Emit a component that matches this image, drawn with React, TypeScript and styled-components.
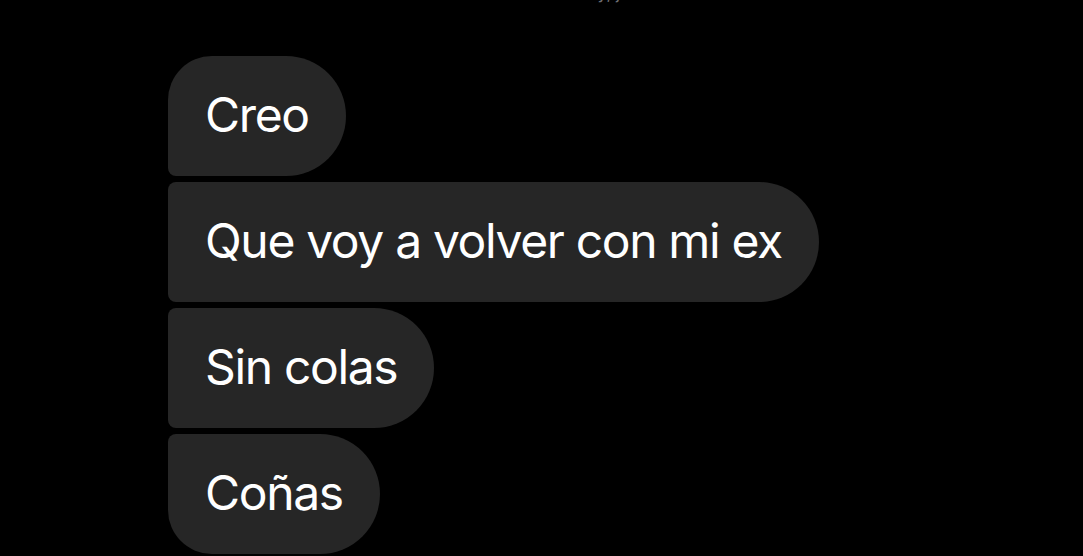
import React from 'react';
import styled, {createGlobalStyle} from "styled-components";

const GlobalStyle = createGlobalStyle`
  html, body {
    margin: 0;
    padding: 0;
    background: #000;
  }

  body {
    font-family: Inter, "Noto Sans", "Liberation Sans", sans-serif;
    -webkit-font-smoothing: antialiased;
  }
`;

const Screen = styled.div`
  width: 1083px;
  height: 556px;
  overflow: hidden;
  background: #000;
`;

const Stamp = styled.div`
  margin-top: -14px;
  height: 20px;
  text-align: center;
  padding-left: 160px;
  font-size: 17px;
  color: #6e6e73;
  line-height: 14px;
`;

const Thread = styled.div`
  display: flex;
  flex-direction: column;
  align-items: flex-start;
  gap: 6px;
  padding: 50px 0 0 168px;
`;

type Place = "first" | "middle" | "last";

const corners: Record<Place, string> = {
    first: "44px 60px 60px 8px",
    middle: "8px 60px 60px 8px",
    last: "8px 60px 60px 44px",
};

const Bubble = styled.div<{ $place: Place }>`
  display: flex;
  align-items: center;
  height: 120px;
  box-sizing: border-box;
  padding: 0 37px 4px 37px;

  font-size: 48px;
  letter-spacing: -1.35px;
  color: #fff;
  white-space: nowrap;

  background: #262626;
  border-radius: ${p => corners[p.$place]};
`;

const messages = ["Creo", "Que voy a volver con mi ex", "Sin colas", "Coñas"];

export default function App() {
    return (
        <Screen>
            <GlobalStyle/>
            <Stamp>Hoy, jueves</Stamp>
            <Thread>
                {messages.map((text, i) => (
                    <Bubble
                        key={text}
                        $place={i === 0 ? "first" : i === messages.length - 1 ? "last" : "middle"}
                    >
                        {text}
                    </Bubble>
                ))}
            </Thread>
        </Screen>
    );
}
